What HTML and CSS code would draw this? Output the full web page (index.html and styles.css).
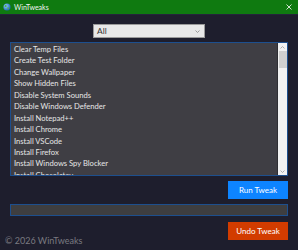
FILE: index.html
```html
<!DOCTYPE html>
<html>
<head>
<meta charset="utf-8">
<link rel="stylesheet" href="styles.css">
</head>
<body>
<div class="window">
  <div class="titlebar">
    <svg class="globe" width="8" height="8" viewBox="0 0 8 8">
      <defs>
        <radialGradient id="g" cx="35%" cy="35%" r="70%">
          <stop offset="0" stop-color="#8fd0ff"/>
          <stop offset="1" stop-color="#1a5fb0"/>
        </radialGradient>
      </defs>
      <circle cx="4" cy="4" r="3.6" fill="url(#g)"/>
      <path d="M2 2.2 C3 1.6 4 2.4 3.6 3.4 C3.2 4.2 2.2 4 1.6 3.4 Z" fill="#4fb04a"/>
      <path d="M4.6 4.4 C5.6 4.2 6.4 5 6 6 C5.4 6.6 4.6 6.2 4.4 5.4 Z" fill="#4fb04a"/>
    </svg>
    <span class="title">WinTweaks</span>
    <svg class="close" width="6" height="6" viewBox="0 0 6 6">
      <path d="M0.5 0.5 L5.5 5.5 M5.5 0.5 L0.5 5.5" stroke="#e6f0e6" stroke-width="0.9"/>
    </svg>
  </div>
  <div class="content">
    <div class="select">
      <span>All</span>
      <svg width="5" height="3" viewBox="0 0 5 3"><path d="M0.5 0.5 L2.5 2.5 L4.5 0.5" fill="none" stroke="#888" stroke-width="0.8"/></svg>
    </div>
    <div class="listbox">
      <ul class="items">
        <li>Clear Temp Files</li>
        <li>Create Test Folder</li>
        <li>Change Wallpaper</li>
        <li>Show Hidden Files</li>
        <li>Disable System Sounds</li>
        <li>Disable Windows Defender</li>
        <li>Install Notepad++</li>
        <li>Install Chrome</li>
        <li>Install VSCode</li>
        <li>Install Firefox</li>
        <li>Install Windows Spy Blocker</li>
        <li>Install Chocolatey</li>
      </ul>
      <div class="scrollbar">
        <div class="arrow"><svg width="5" height="3" viewBox="0 0 5 3"><path d="M0.5 2.5 L2.5 0.5 L4.5 2.5" fill="none" stroke="#999" stroke-width="0.8"/></svg></div>
        <div class="track"><div class="thumb"></div></div>
        <div class="arrow"><svg width="5" height="3" viewBox="0 0 5 3"><path d="M0.5 0.5 L2.5 2.5 L4.5 0.5" fill="none" stroke="#999" stroke-width="0.8"/></svg></div>
      </div>
    </div>
    <div class="row-right">
      <button class="btn run">Run Tweak</button>
    </div>
    <div class="progress"></div>
    <div class="bottom-row">
      <span class="footer">© 2026 WinTweaks</span>
      <button class="btn undo">Undo Tweak</button>
    </div>
  </div>
</div>
</body>
</html>
```
FILE: styles.css
```css
* { box-sizing: border-box; }
html, body {
  margin: 0;
  padding: 0;
  width: 298px;
  height: 250px;
  overflow: hidden;
  background: #1e1e2d;
  font-family: Lato, "Noto Sans", sans-serif;
}
.window {
  width: 298px;
  height: 250px;
  display: flex;
  flex-direction: column;
}
.titlebar {
  height: 15px;
  background: #0f7a10;
  display: flex;
  align-items: center;
  padding: 0 6px 0 3px;
  border-bottom: 1px solid #24243a;
}
.globe { margin-right: 3px; }
.title {
  color: #f2f2f2;
  font-size: 7px;
  flex: 1;
}
.content {
  display: flex;
  flex-direction: column;
  padding: 9px 10px 0 10px;
}
.select {
  align-self: center;
  width: 112px;
  height: 14px;
  background: #e8e8e8;
  border: 1px solid #9a9a9a;
  display: flex;
  align-items: center;
  justify-content: space-between;
  padding: 0 4px 0 3px;
  color: #333;
  font-size: 8.4px;
}
.listbox {
  margin-top: 4px;
  height: 134px;
  border: 1px solid #1d4f8e;
  background: #3f3e44;
  display: flex;
}
.items {
  list-style: none;
  margin: 0;
  padding: 1px 0 0 3px;
  flex: 1;
  min-width: 0;
  overflow: hidden;
  color: #e6e6e6;
  font-size: 7.6px;
}
.items li {
  height: 11.45px;
  line-height: 11.45px;
  white-space: nowrap;
}
.scrollbar {
  flex: 0 0 10px;
  width: 10px;
  background: #f2f2f2;
  border-left: 1px solid #2e2e33;
  display: flex;
  flex-direction: column;
}
.arrow {
  height: 8px;
  display: flex;
  align-items: center;
  justify-content: center;
}
.track { flex: 1; }
.thumb {
  height: 17px;
  background: #d0d0d0;
  margin: 0 0.5px;
}
.row-right {
  display: flex;
  justify-content: flex-end;
  margin-top: 5px;
}
.btn {
  width: 60px;
  height: 18px;
  border: none;
  color: #fff;
  font-family: Lato, "Noto Sans", sans-serif;
  font-size: 8px;
  padding: 0;
}
.run { background: #0d84ff; }
.undo { background: #d23c00; }
.progress {
  margin-top: 5px;
  height: 12px;
  border: 1px solid #1d4f8e;
  background: #3e3e40;
}
.bottom-row {
  margin-top: 6px;
  margin-left: -5px;
  display: flex;
  justify-content: space-between;
  align-items: flex-end;
}
.footer {
  color: #7a7a80;
  font-size: 9px;
  margin-bottom: -6px;
}
```
